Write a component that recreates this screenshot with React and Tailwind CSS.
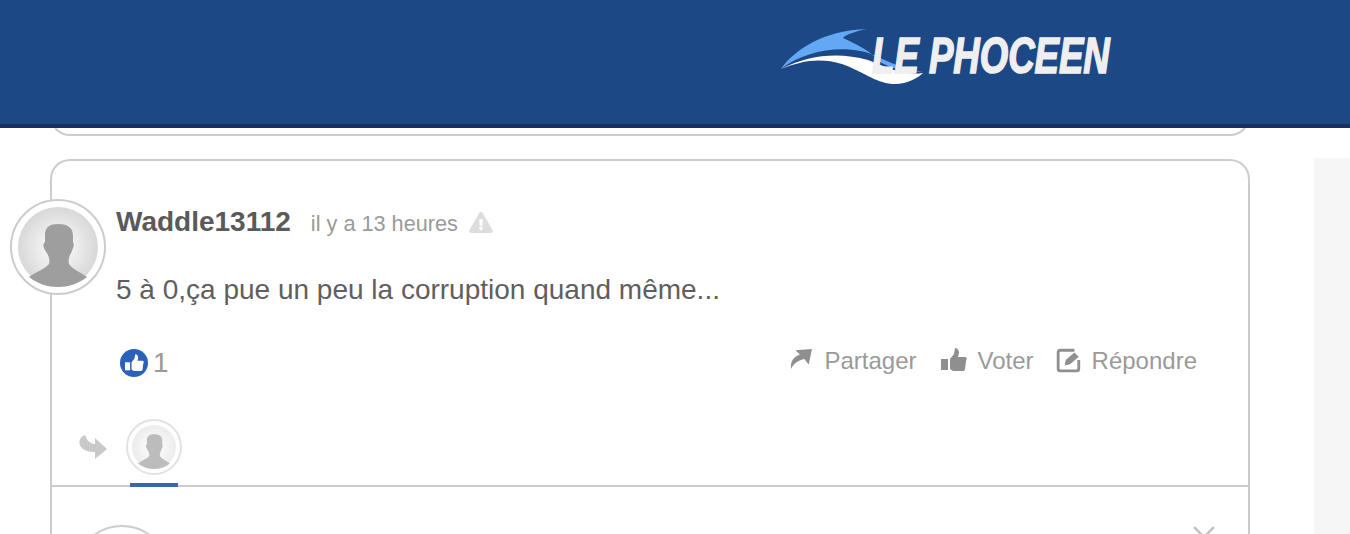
import { FaExclamationTriangle } from 'react-icons/fa';

function Silhouette({ className, id, edge, fill }) {
  return (
    <svg viewBox="0 0 80 80" className={className}>
      <defs>
        <radialGradient id={id} cx="50%" cy="50%" r="50%">
          <stop offset="0%" stopColor="#ffffff" />
          <stop offset="100%" stopColor={edge} />
        </radialGradient>
      </defs>
      <circle cx="40" cy="40" r="40" fill={`url(#${id})`} />
      <path
        d="M27 28C27 20 32 17 40 17C49 17 55 20 55 29L55 35C56 37 56 39 55 41C54 44 53 46 52 48C51 51 50 54 51 57C54 62 62 65 69 70C60 77 50 80 40 80C30 80 20 77 11 70C18 65 27 62 31 57C32 54 31 51 30 48C29 46 27 44 26 41C25 39 25 37 27 35Z"
        fill={fill}
      />
    </svg>
  );
}

function Thumb({ className }) {
  return (
    <svg viewBox="0 0 26 24" className={className} fill="currentColor">
      <path d="M0 11h7v11H0z" />
      <path d="M9 11l4-5 1-6c3 0 4 3 4 5l-1 4h7c2 0 2 2 1 4l-1 8c0 2-2 2-3 2h-9l-3-2z" />
    </svg>
  );
}

function Action({ icon, label, gap }) {
  return (
    <span className={`flex items-center ${gap}`}>
      {icon}
      <span>{label}</span>
    </span>
  );
}

export default function App() {
  return (
    <div className="h-[534px] overflow-hidden bg-white font-['Liberation_Sans',Arial,sans-serif]">
      <header className="relative z-10 h-[128px] bg-[#1c4985] border-b-4 border-[#17305f] pl-[780px] pt-[26px]">
        <svg viewBox="0 0 340 62" className="w-[340px] h-[62px]">
          <path d="M1 43C14 24 44 4 87 3 76 5 65 9 63 12 74 17 90 24 100 36 114 44 128 45 143 46 124 42 112 38 96 30 70 18 28 22 1 43z" fill="#62a8f5" />
          <path d="M1 43C30 28 60 26 88 34 108 42 124 50 143 47 138 52 126 59 112 58 94 56 84 46 62 38 40 31 20 35 1 43z" fill="#ffffff" />
          <g transform="scale(0.731 1)">
            <text
              x="126"
              y="47"
              fontFamily="Liberation Sans"
              fontWeight="700"
              fontStyle="italic"
              fontSize="50"
              fill="#efefef"
              stroke="#efefef"
              strokeWidth="1.6"
            >
              LE PHOCEEN
            </text>
          </g>
        </svg>
      </header>

      <div className="flex">
        <main className="w-[1314px] pl-[50px]">
          <div className="w-[1200px] h-[30px] mt-[-22px] border-2 border-t-0 border-[#cccccc] rounded-b-[20px]" />

          <article className="relative w-[1200px] mt-[23px] border-2 border-[#cccccc] rounded-t-[20px] border-b-0 h-[400px]">
            <div className="absolute left-[-42px] top-[38px] w-[96px] h-[96px] rounded-full border-2 border-[#cccccc] bg-white p-[6px]">
              <Silhouette id="avatarMain" edge="#d8d8d8" fill="#9e9e9e" className="w-[80px] h-[80px]" />
            </div>

            <div className="pl-[64px] pr-[51px] pt-[40px]">
              <div className="flex items-baseline text-[#9a9a9a] text-[21.7px]">
                <span className="font-bold text-[28px] text-[#5a5a5a] mr-[20px]">Waddle13112</span>
                <span>il y a 13 heures</span>
                <FaExclamationTriangle className="ml-[11px] w-[24px] h-[21px] text-[#dddddd] self-center" />
              </div>

              <p className="mt-[30px] text-[28px] leading-[34px] text-[#5f5f5f]">5 à 0,ça pue un peu la corruption quand même...</p>

              <div className="flex items-center justify-between mt-[38px] h-[32px]">
                <div className="flex items-center pl-[4px] pt-[4px] text-[28px] text-[#9a9a9a]">
                  <span className="flex items-center justify-center w-[28px] h-[28px] rounded-full bg-[#2a62b8] text-white">
                    <Thumb className="w-[19px] h-[18px]" />
                  </span>
                  <span className="ml-[5px]">1</span>
                </div>
                <div className="flex items-center gap-[22px] text-[24px] text-[#9a9a9a]">
                  <Action
                    label="Partager"
                    gap="gap-[12px] mr-[2px]"
                    icon={
                      <svg viewBox="0 0 20 18" className="w-[22px] h-[20px] mb-[4px] text-[#8f8f8f]" fill="currentColor">
                        <path d="M5 1L20 0 17 14 13 9C8 10 3 13 1 18 0 12 3 7 9 5Z" />
                      </svg>
                    }
                  />
                  <Action label="Voter" gap="gap-[11px]" icon={<Thumb className="w-[26px] h-[24px] mb-[2px] text-[#8f8f8f]" />} />
                  <Action
                    label="Répondre"
                    gap="gap-[10px]"
                    icon={
                      <svg viewBox="0 0 24 24" className="w-[26px] h-[26px] mb-[2px]" fill="none" stroke="#8f8f8f" strokeWidth="2.6">
                        <path d="M21 12v8a2 2 0 0 1-2 2H4a2 2 0 0 1-2-2V5a2 2 0 0 1 2-2h13" />
                        <path d="M8 17l1-5 8-7 4 4-8 7z" fill="#8f8f8f" stroke="none" />
                      </svg>
                    }
                  />
                </div>
              </div>

              <div className="flex items-center mt-[42px] ml-[-37px]">
                <svg viewBox="0 0 28 24" className="w-[28px] h-[24px]" fill="#c9c9c9">
                  <path d="M6 0C0 2-1 8 2 12 5 16 11 17 16 17V24L28 14 16 3V9C12 9 8 6 6 0Z" />
                </svg>
                <div className="ml-[19px]">
                  <div className="w-[56px] h-[56px] rounded-full border-2 border-[#e2e2e2] bg-white p-[4px]">
                    <Silhouette id="avatarSmall" edge="#ececec" fill="#bcbcbc" className="w-[44px] h-[44px]" />
                  </div>
                </div>
              </div>
            </div>

            <div className="relative mt-[10px] border-t-2 border-[#cccccc]">
              <div className="absolute left-[78px] top-[-4px] w-[48px] h-[4px] bg-[#3c67a3]" />
              <div className="absolute left-[22px] top-[38px] w-[96px] h-[96px] rounded-full border-2 border-[#cccccc] bg-white" />
              <div className="flex justify-end pr-[33px] pt-[39px]">
                <svg viewBox="0 0 22 12" className="w-[22px] h-[12px]" fill="none" stroke="#c4c4c4" strokeWidth="2.5">
                  <path d="M1 1l10 10L21 1" />
                </svg>
              </div>
            </div>
          </article>
        </main>

        <aside className="flex-1 mt-[30px] h-[400px] bg-[#f6f6f6]" />
      </div>
    </div>
  );
}
